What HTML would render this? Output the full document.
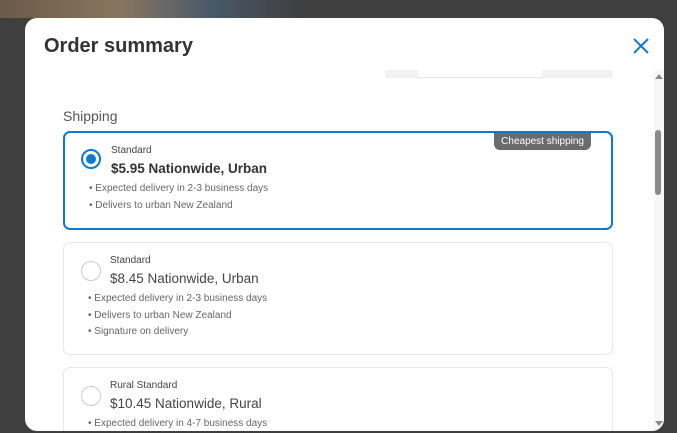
<!DOCTYPE html><html><head><style>
body{margin:0;width:677px;height:433px;overflow:hidden;background:#3f3f3f;font-family:"Liberation Sans",sans-serif;position:relative}
.bgimg{position:absolute;left:0;top:0;width:300px;height:18px;background:linear-gradient(90deg,#6b5a48,#8a7560 40%,#4a5a6a 70%,#3f3f3f)}
.modal{position:absolute;left:25px;top:18px;width:639px;height:413px;background:#fff;border-radius:12px;overflow:hidden}
h1{position:absolute;left:19px;top:17px;margin:0;font-size:20px;font-weight:bold;color:#333}
.x{position:absolute;left:606px;top:18px}
.seg{position:absolute;left:360px;top:52px;width:228px;height:8px;background:#f3f2f1}
.seg div{position:absolute;left:33px;width:124px;top:0;height:7px;background:#fff;border-bottom:1px solid #e6e6e6}
.sh{position:absolute;left:38px;top:90px;font-size:14px;color:#555}
.card{position:absolute;left:38px;width:548px;border:1px solid #e8e8e8;border-radius:7px;background:#fff}
.card.sel{border:2px solid #0a7bd1;left:38px;width:546px}
.rad{position:absolute;left:17px;top:18px;width:18px;height:18px;border:1px solid #ccc;border-radius:50%}
.sel .rad{border:2px solid #0a7bd1;width:16px;height:16px;left:16px;top:16px}
.sel .rad:after{content:"";position:absolute;left:3px;top:3px;width:10px;height:10px;border-radius:50%;background:#0a7bd1}
.t{position:absolute;left:46px;top:12px;font-size:10px;color:#444}
.p{position:absolute;left:46px;top:28px;font-size:13.5px;color:#444}
.sel .p{font-weight:bold;color:#333}
.b{position:absolute;left:24px;font-size:10px;color:#666}
.tag{position:absolute;right:20px;top:0;background:#6b6b6b;color:#fff;font-size:10px;padding:3px 7px;border-radius:0 0 6px 6px}
.sb{position:absolute;left:629px;top:52px;width:10px;height:361px;background:#f7f7f7}
.th{position:absolute;left:630px;top:112px;width:6px;height:65px;background:#8a8a8a;border-radius:3px}
</style></head><body>
<div class="bgimg"></div>
<div class="modal">
<h1>Order summary</h1>
<svg class="x" width="20" height="20" viewBox="0 0 20 20"><path d="M3 3L17 17M17 3L3 17" stroke="#0a7bd1" stroke-width="2"/></svg>
<div class="seg"><div></div></div>
<div class="sh">Shipping</div>
<div class="card sel" style="top:113px;height:95px"><div class="tag">Cheapest shipping</div><div class="rad"></div><div class="t">Standard</div><div class="p">$5.95 Nationwide, Urban</div><div class="b" style="top:50px">• Expected delivery in 2-3 business days</div><div class="b" style="top:67px">• Delivers to urban New Zealand</div></div>
<div class="card" style="top:224px;height:111px"><div class="rad"></div><div class="t">Standard</div><div class="p">$8.45 Nationwide, Urban</div><div class="b" style="top:50px">• Expected delivery in 2-3 business days</div><div class="b" style="top:67px">• Delivers to urban New Zealand</div><div class="b" style="top:83px">• Signature on delivery</div></div>
<div class="card" style="top:349px;height:90px"><div class="rad"></div><div class="t">Rural Standard</div><div class="p">$10.45 Nationwide, Rural</div><div class="b" style="top:50px">• Expected delivery in 4-7 business days</div></div>
<div class="sb"></div><div class="th"></div>
<svg style="position:absolute;left:629px;top:55px" width="10" height="8"><path d="M1 6L5 1L9 6Z" fill="#888"/></svg>
<svg style="position:absolute;left:629px;top:402px" width="10" height="8"><path d="M1 1L5 6L9 1Z" fill="#888"/></svg>
</div>
</body></html>
